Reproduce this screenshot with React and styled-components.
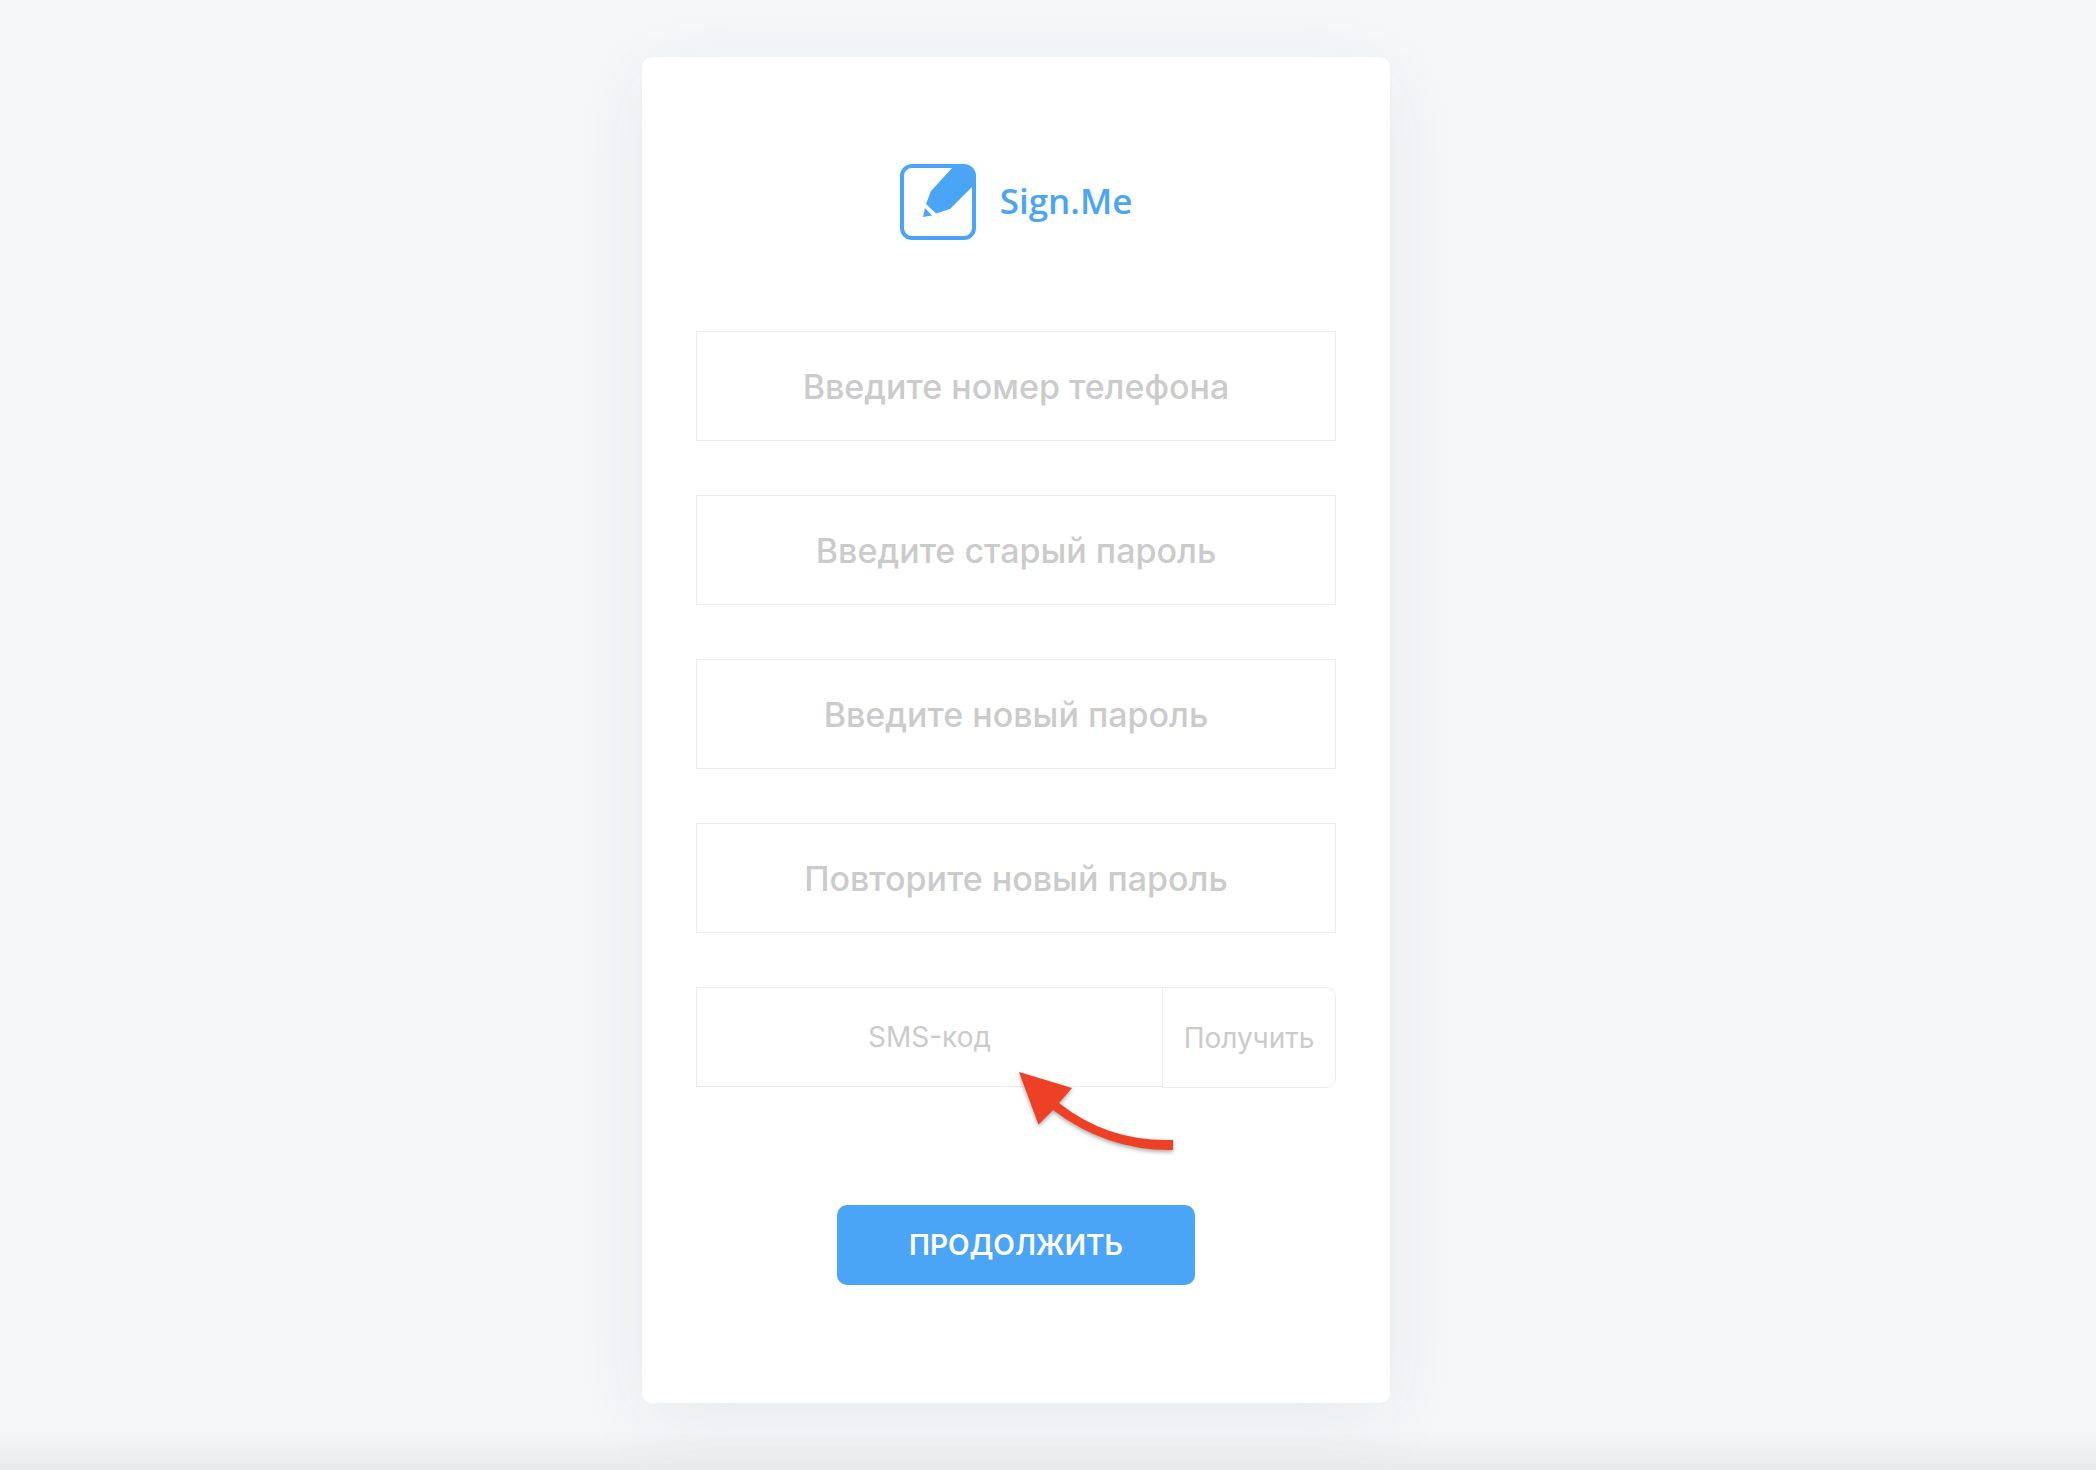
import React, { useState } from "react";
import styled, { createGlobalStyle } from "styled-components";

const FIELDS = [
  { name: "phone", type: "tel", label: "Введите номер телефона" },
  { name: "oldPassword", type: "password", label: "Введите старый пароль" },
  { name: "newPassword", type: "password", label: "Введите новый пароль" },
  { name: "repeatPassword", type: "password", label: "Повторите новый пароль" },
];

const Logo = () => (
  <LogoLink href="/">
    <svg width="76" height="76" viewBox="0 0 76 76" aria-hidden="true">
      <rect
        x="2"
        y="2"
        width="72"
        height="72"
        rx="10"
        fill="none"
        stroke="#4ba5f7"
        strokeWidth="4"
      />
      <path
        d="M53 3 H64 Q73 3 73 12 V22 L50 45 L36 49.500 L26 40 L31 27 Z"
        fill="#4ba5f7"
      />
      <path d="M25 44 L32 51.500 L23 53 Z" fill="#4ba5f7" />
    </svg>
    Sign.Me
  </LogoLink>
);

const App = () => {
  const [values, setValues] = useState({});

  const onChange = (e) => {
    setValues({ ...values, [e.target.name]: e.target.value });
  };

  const onSubmit = (e) => {
    e.preventDefault();
  };

  return (
    <Page>
      <GlobalStyle />
      <Card onSubmit={onSubmit}>
        <Logo />
        {FIELDS.map(({ name, type, label }) => (
          <Field
            key={name}
            name={name}
            type={type}
            aria-label={label}
            placeholder={label}
            value={values[name] || ""}
            onChange={onChange}
          />
        ))}
        <SmsRow>
          <SmsField
            name="sms"
            aria-label="SMS-код"
            placeholder="SMS-код"
            value={values.sms || ""}
            onChange={onChange}
          />
          <GetButton type="button">Получить</GetButton>
          <Arrow viewBox="0 0 180 100" aria-hidden="true">
            <path
              d="M9 8 L62 24 L49 39 Q98 78 163 76 V86 Q97 87 43 46 L28.500 60.500 Z"
              fill="#ee4025"
            />
          </Arrow>
        </SmsRow>
        <Submit type="submit">Продолжить</Submit>
      </Card>
    </Page>
  );
};

export default App;

const GlobalStyle = createGlobalStyle`
  *, *::before, *::after {
    box-sizing: border-box;
  }

  body {
    margin: 0;
    font-family: Inter, "Liberation Sans", sans-serif;
  }
`;

const Page = styled.main`
  display: flex;
  justify-content: center;
  align-items: flex-start;
  min-height: 100vh;
  padding: 57px 64px 67px 0;
  background: linear-gradient(to top, #e9eaeb, #f5f7f9 40px);
`;

const Card = styled.form`
  display: flex;
  flex-direction: column;
  align-items: center;
  gap: 54px;
  width: 100%;
  max-width: 748px;
  padding: 107px 54px 118px;
  border-radius: 10px;
  background: #fff;
  box-shadow: 0 16px 80px rgba(50, 65, 75, 0.07);
`;

const LogoLink = styled.a`
  display: flex;
  align-items: flex-start;
  gap: 24px;
  margin-bottom: 37px;
  color: #4ba5f7;
  font-family: "Open Sans", "Noto Sans", sans-serif;
  font-size: 35px;
  font-weight: 600;
  line-height: 74px;
  text-decoration: none;
`;

const Field = styled.input`
  width: 100%;
  height: 110px;
  padding: 0 24px;
  border: 1px solid #ececec;
  border-radius: 0;
  outline: none;
  background: transparent;
  color: #333;
  font-family: inherit;
  font-size: 34px;
  font-weight: 500;
  text-align: center;
  &::placeholder {
    color: #cbcbcb;
    opacity: 1;
  }
`;

const SmsRow = styled.div`
  position: relative;
  display: flex;
  align-items: flex-start;
  width: 100%;
  margin-bottom: 63px;
`;

const SmsField = styled(Field)`
  flex: 1;
  min-width: 0;
  height: 100px;
  border-right: 0;
  font-size: 28px;
  font-weight: 400;
`;

const GetButton = styled.button`
  width: 174px;
  height: 101px;
  padding: 0;
  border: 1px solid #ececec;
  border-radius: 0 10px 10px 0;
  background: #fff;
  color: #cbcbcb;
  font-family: inherit;
  font-size: 28px;
  cursor: pointer;
`;

const Arrow = styled.svg`
  position: absolute;
  top: 77px;
  right: 146px;
  width: 180px;
  height: 100px;
  pointer-events: none;
  filter: drop-shadow(0 2px 2px rgba(0, 0, 0, 0.35));
`;

const Submit = styled.button`
  width: 358px;
  height: 80px;
  border: 0;
  border-radius: 10px;
  background: #4ba5f7;
  color: #fff;
  font-family: inherit;
  font-size: 28px;
  font-weight: 600;
  text-transform: uppercase;
  cursor: pointer;
`;
